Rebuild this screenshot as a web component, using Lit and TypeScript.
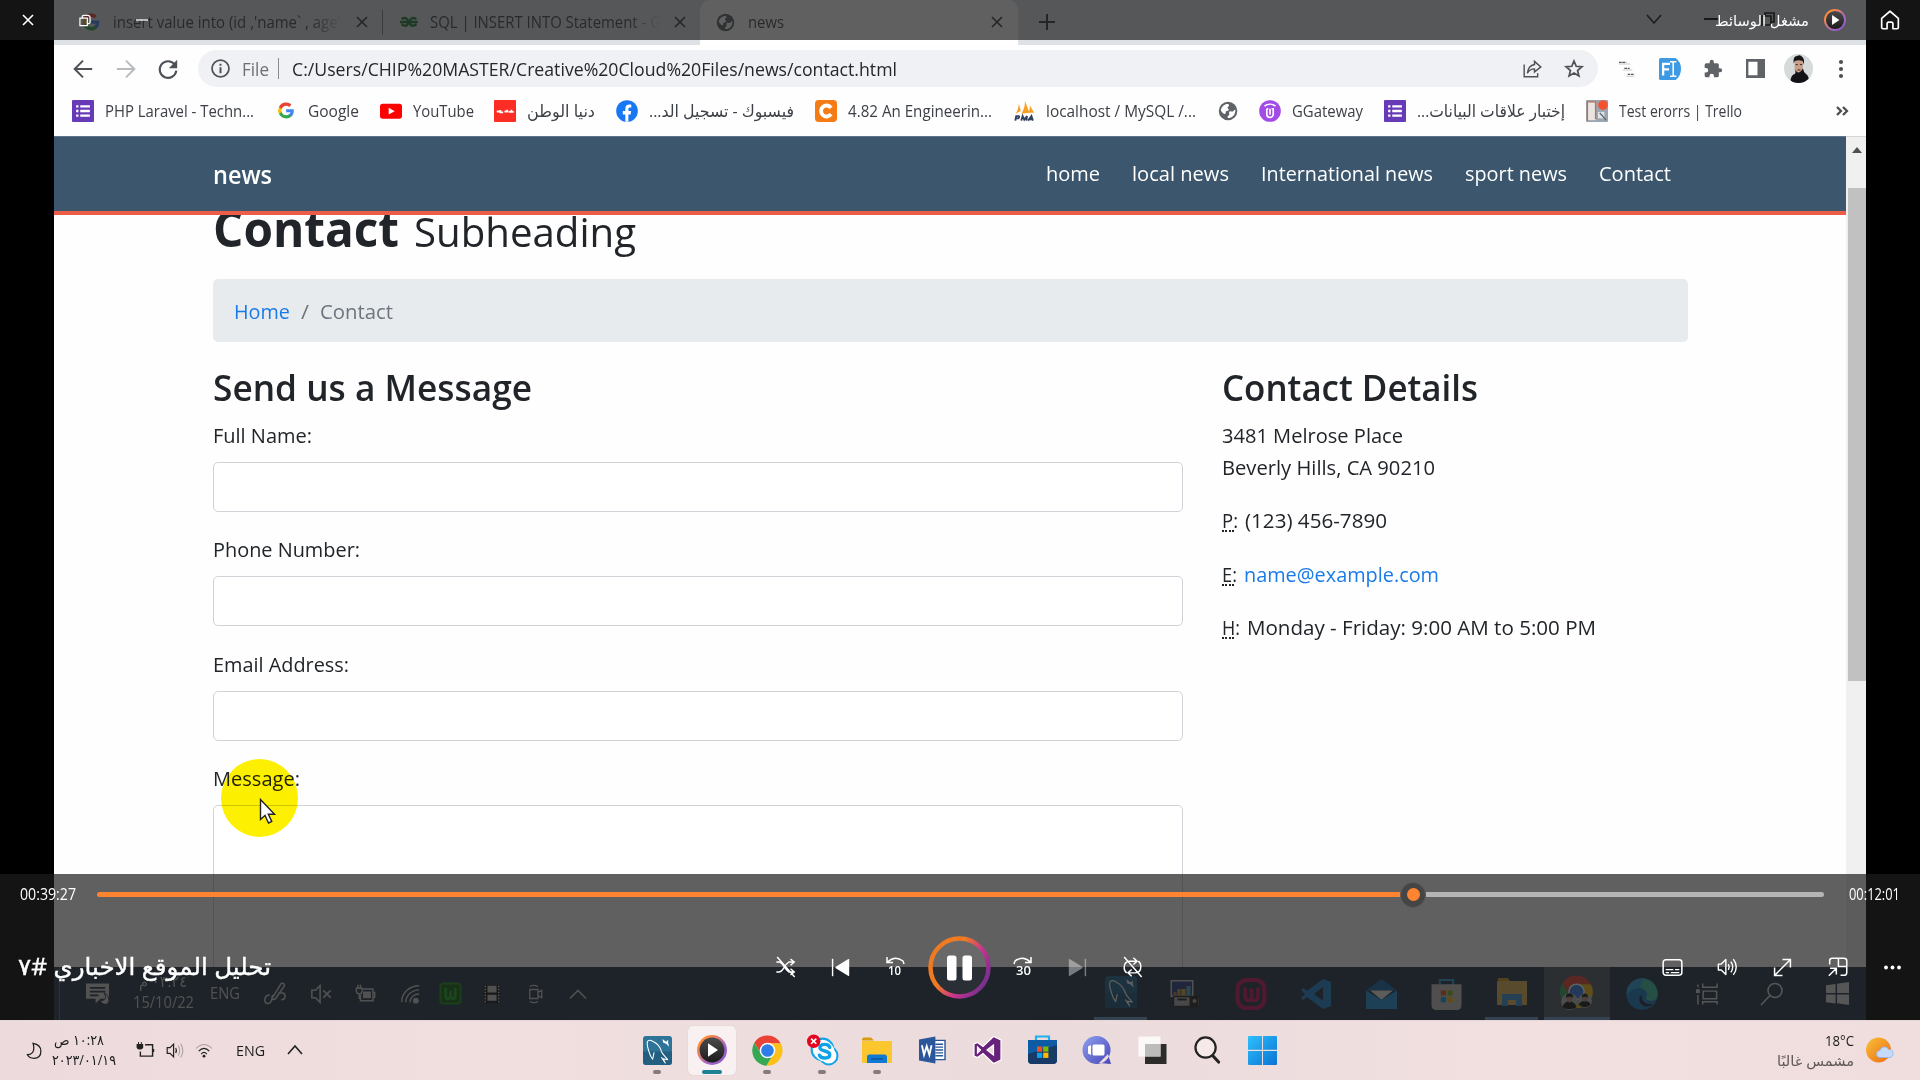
import { LitElement, html, css, svg, TemplateResult } from 'lit';
import { customElement, property } from 'lit/decorators.js';

/** Text squeezed or stretched horizontally to an exact width. */
@customElement('fit-text')
class FitText extends LitElement {
  @property({ type: Number }) w = 0;
  @property() flow = 'ltr';
  static styles = css`
    :host { display: inline-block; white-space: pre; direction: ltr; flex: none; text-align: left; }
    span { display: inline-block; transform-origin: 0 50%; }
  `;
  render() {
    return html`<span dir=${this.flow}><slot></slot></span>`;
  }
  updated() {
    const s = this.renderRoot.querySelector('span') as HTMLElement;
    s.style.transform = 'none';
    const n = s.getBoundingClientRect().width;
    this.style.width = this.w + 'px';
    if (n) s.style.transform = `scaleX(${this.w / n})`;
  }
}

const t = (text: string, w: number, flow = 'ltr') => html`<fit-text .w=${w} .flow=${flow}>${text}</fit-text>`;
const box = (w: number, h: number, body: TemplateResult | TemplateResult[], vb = '0 0 24 24') =>
  html`<svg width=${w} height=${h} viewBox=${vb} fill="none">${body}</svg>`;

const G = svg`<path fill="#4285f4" d="M23 12.3c0-.8-.1-1.500-.2-2.200H12.200v4.300h6.100c-.3 1.400-1.100 2.600-2.300 3.400v2.800h3.700c2.100-2 3.300-4.900 3.300-8.300z"/><path fill="#34a853" d="M12.200 23.200c3.100 0 5.600-1 7.500-2.700L16 17.700c-1 .7-2.300 1.100-3.800 1.100-2.900 0-5.400-2-6.300-4.700H2.100V17c1.900 3.700 5.700 6.200 10.100 6.200z"/><path fill="#fbbc05" d="M5.900 14.100c-.5-1.400-.5-2.900 0-4.300V6.900H2.100a11.200 11.200 0 0 0 0 10.100z"/><path fill="#ea4335" d="M12.200 5.200c1.700 0 3.100.6 4.300 1.700l3.200-3.200A11 11 0 0 0 2.100 6.900l3.800 2.900c.9-2.700 3.400-4.600 6.300-4.600z"/>`;
const GLOBE = svg`<circle cx="12" cy="12" r="11" fill="#5f6368"/><path fill="#fff" d="M3.500 11.500c.3-3.500 2.800-6.600 6.500-7.700 1.800-.4 3 .2 3.200 1.200.2 1.300-1.700 1.500-1.900 2.900-.1 1.300 1.900 1.400 1.600 2.900-.3 1.400-2.300.8-3.300 1.600-.9.8.2 2.100-.9 2.900-1.200.8-3.200-.6-5.200-3.800zM20.700 10.500c.3 4.700-2.300 8.700-6.700 9.700-1.500.3-2.700-.2-2.600-1.400.1-1.400 1.800-1.300 2.100-2.800.2-1.200-.8-2 .1-3.100 1.300-1.400 2.800.2 4.200-.4 1.200-.5 1.200-2.500 2.900-2z"/>`;
const FORMS = svg`<path fill="#673ab7" d="M1 0h22a1 1 0 0 1 1 1v22a1 1 0 0 1-1 1H1a1 1 0 0 1-1-1V1a1 1 0 0 1 1-1z"/><path stroke="#fff" stroke-width="2.600" d="M9 7h10.500M9 12h10.500M9 17h10.500M4.500 7h2.500M4.500 12h2.500M4.500 17h2.500"/>`;
const CHROME = svg`<path fill="#ea4335" d="M1.800 6A11.800 11.800 0 0 1 22.300 6.600H12a5.500 5.500 0 0 0-5 7.700z"/><path fill="#34a853" d="M1.800 6a11.800 11.800 0 0 0 9.400 17.800L16.700 14.800 12 12 7.300 15z"/><path fill="#fbc116" d="M22.300 6.600A11.800 11.800 0 0 1 11.200 23.800L16.700 14.800A5.500 5.500 0 0 0 12 6.600z"/><circle cx="12" cy="12" r="6" fill="#fff"/><circle cx="12" cy="12" r="4.900" fill="#2f7de9"/>`;
const DOLPHIN = (a: string, b: string) => svg`<rect width="30" height="30" rx="3" fill="${a}"/><path fill="${b}" opacity=".5" d="M0 16h30v11a3 3 0 0 1-3 3H3a3 3 0 0 1-3-3z"/><path stroke="#fff" stroke-width="1.100" fill="none" stroke-linejoin="round" d="M8 21C6 16 3.500 10 4.500 6 5.500 3.500 8.500 4 11 6c4 2 7 6 8 10 1.500 3.500 4 5 6.500 8.500l-4.500-1 2 4.500-4-6M8 21l2 3 1.500-7"/><path fill="#fff" d="m20 3 4 3 2-2 0 3 1 4-3-3-3-1z"/>`;
const FOLDER = (low: string) => svg`<path fill="#d89b0b" d="M0 3.500A2 2 0 0 1 2 1.500h7l3 3H0z"/><path fill="#fcc72e" d="M0 5h30v21a1 1 0 0 1-1 1H1a1 1 0 0 1-1-1z"/><path fill="${low}" d="M5 27v-6a2.500 2.500 0 0 1 2.500-2.500h15A2.500 2.500 0 0 1 25 21v6z"/><path stroke="#0a4f96" stroke-width="1.300" d="M9 23h12"/>`;

const dots4 = (x: number, y: number, s: number, g: number) => svg`<path fill="#f25022" d="M${x} ${y}h${s}v${s}h-${s}z"/><path fill="#7fba00" d="M${x + s + g} ${y}h${s}v${s}h-${s}z"/><path fill="#00a4ef" d="M${x} ${y + s + g}h${s}v${s}h-${s}z"/><path fill="#ffb900" d="M${x + s + g} ${y + s + g}h${s}v${s}h-${s}z"/>`;

const bookmarks: [TemplateResult, string, number, string?][] = [
  [box(22, 22, FORMS), 'PHP Laravel - Techn...', 149],
  [box(22, 17, G), 'Google', 51],
  [box(22, 22, svg`<rect y="4" width="24" height="16.500" rx="3" fill="#f00"/><path fill="#fff" d="m9.500 8.500 6.500 3.700-6.500 3.700z"/>`), 'YouTube', 61],
  [box(22, 22, svg`<rect width="24" height="24" rx="1" fill="#fb2d25"/><path stroke="#fff" stroke-width="2" d="M3 12.500h3M7 11v2.500h3M11.500 12.500h3v-2M16 13h2M19 10.500v2.500h2.500"/>`), 'دنيا الوطن', 68, 'rtl'],
  [box(22, 22, svg`<circle cx="12" cy="12" r="11.800" fill="#1877f2"/><path fill="#fff" d="M10.200 23.700v-8H7.400V12h2.800V9.500c0-3 1.700-4.500 4.300-4.500 1.200 0 2.200.2 2.200.2v2.900h-1.400c-1.400 0-1.800.9-1.800 1.700V12h3l-.5 3.700h-2.500v8z"/>`), 'فيسبوك - تسجيل الد...', 145, 'rtl'],
  [box(22, 22, svg`<rect width="24" height="24" rx="4" fill="#f57c14"/><path stroke="#fff" stroke-width="4.200" d="M17.500 8.500A6 6 0 1 0 17.500 15.500"/>`), '4.82 An Engineerin...', 144],
  [box(22, 22, svg`<path fill="#f7a024" d="M3 15C5 11 6 8 6.500 4l2 8zM9 15C12 10 13 7 13 1l5 13zM17 14c1-3 1.500-5 1.500-8l4.500 8z"/><path stroke="#33415f" stroke-width="2" d="M2.500 22.500 3.500 17.500h2.700q1.300 1.200-.5 2.600H3M9 22.500l1.500-5 1.800 4 3-4-.8 5M16.500 22.500l3.600-5 1.600 5M18 21h3.500"/>`), 'localhost / MySQL /...', 150],
  [box(22, 22, svg`<g transform="translate(1 1) scale(.92)">${GLOBE}</g>`), '', 0],
  [box(22, 22, svg`<circle cx="12" cy="12" r="11.800" fill="#a24be6"/><path stroke="#fff" stroke-width="1.800" d="M6 6.500c3.500-2.500 8.500-2.500 12 0M8.500 9.500v6a3.500 3.500 0 0 0 7 0v-6h-1.800M12 9.500v6.500M8.500 9.500h1.700"/>`), 'GGateway', 71],
  [box(22, 22, FORMS), 'إختبار علاقات البيانات...', 148, 'rtl'],
  [box(22, 22, svg`<rect width="24" height="24" rx="1" fill="#9aa6b0"/><path fill="#e8e4df" d="M2 2h9v20H2z"/><path stroke="#b3705e" stroke-width="1.500" d="M1.500 23V2h9v19"/><path fill="#dfe3e6" d="M13 13h7v7h-7z"/><path stroke="#59636c" stroke-width="1.500" d="m15 14 7 8"/><circle cx="18.500" cy="5.500" r="5.300" fill="#f45331"/>`), 'Test erorrs | Trello', 123],
];

const PLAY = svg`<defs><linearGradient id="pl" x1="0" y1="0" x2="1" y2="1"><stop offset=".2" stop-color="#ff8b3d"/><stop offset=".65" stop-color="#a566c8"/><stop offset="1" stop-color="#7f55c0"/></linearGradient><linearGradient id="pd" x1="0" y1="0" x2="0" y2="1"><stop stop-color="#4a4a4a"/><stop offset="1" stop-color="#1c1c1c"/></linearGradient></defs><circle cx="15" cy="15" r="15" fill="url(#pl)"/><circle cx="15" cy="15" r="12.400" fill="url(#pd)"/><path fill="#fff" d="M11 8.300 21 15l-10 6.700z"/>`;

const innerApps = [
  box(32, 32, DOLPHIN('#1d6590', '#0e4460'), '0 0 30 30'),
  box(31, 28, svg`<path fill="#ccc" d="M0 0h23v17H0z"/><path fill="#29428a" d="M1.500 1.500h20v14h-20z"/><path fill="#c07a48" d="M3 12h3v4H3z"/><path fill="#b8a040" d="M7 9h3v7H7z"/><path fill="#d8b030" d="M11 9h4v7h-4z"/><path fill="#58a8c0" d="M16 6h4v10h-4z"/><rect x="3" y="16.500" width="26" height="10" rx="1" fill="#b0b0b0" stroke="#222" stroke-width="1.300"/><path stroke="#222" stroke-width="2" d="M7 19.500h9"/><path fill="#222" d="M19 17h9v9h-9z"/><circle cx="24" cy="21" r="2" fill="#aaa"/>`, '0 0 30 28'),
  box(32, 32, svg`<rect x="2.500" y="2" width="25" height="26" rx="8" stroke="#c6125e" stroke-width="4"/><path stroke="#c6125e" stroke-width="3.500" d="M9.500 9v8q0 4 3 4t3-4V10M15.500 17q0 4 3 4t3-4V9"/>`, '0 0 30 30'),
  box(32, 32, svg`<path fill="#1e88d2" fill-rule="evenodd" d="M22 1 30 4v24l-8 3L6 19l-4 3-2-2 4-4-4-4 2-2 4 3zM22 9l-9 7 9 7z"/>`, '0 0 30 32'),
  box(33, 32, svg`<path fill="#1466ac" d="M0 12 15 1l15 11z"/><path fill="#f3f1ee" d="M4 12h22l-11 9z"/><path fill="#2195dd" d="M0 12l15 9 15-9v18H0z"/>`, '0 0 30 31'),
  box(31, 32, svg`<path stroke="#2a9fd0" stroke-width="2" d="M8 6V2h13v5"/><path fill="#c8c7c4" d="M0 6h29v21a4 4 0 0 1-4 4H4a4 4 0 0 1-4-4z"/>${dots4(9, 12, 5, 1.5)}`, '0 0 29 31'),
  box(30, 28, svg`<path fill="#cf9524" d="M1 0h10l2 3H1z"/><path fill="#e3b756" d="M0 3h30v24H0z"/><path fill="#3b8fd8" d="M5 28V16h20v12h-6v-6h-8v6z"/>`, '0 0 30 28'),
  box(35, 35, svg`${CHROME}<circle cx="7" cy="19" r="6" fill="#b9bec0"/><path fill="#171513" d="M2 23q1-4 5-4t5 4q-5 3-10 0zM4.500 14.500q2.500-3 5 0v2h-5z"/><path fill="#b78f7c" d="M5 15.500h4v2.500l-2 2-2-2z"/><circle cx="18" cy="18.500" r="5" fill="#b9bec0"/><path fill="#171513" d="M13.500 21.500q1-3 4.500-3t4 3q-4 3-8.500 0zM16 14.500q2-2.500 4 0v2h-4z"/><path fill="#b78f7c" d="M16.500 15.500h3v2l-1.500 2-1.500-2z"/>`, '0 0 24 25'),
  box(32, 32, svg`<circle cx="12" cy="12" r="11.800" fill="#1679c4"/><path fill="#3cc6a0" d="M1 8A11.800 11.800 0 0 1 23.800 12c0 4-3.200 5.500-6 5-2.500-.5-3.300-1.700-2.500-3C17 11 14 7.500 9.500 7.500 6 7.500 3 9 1 12z"/><path fill="#2b9fd9" d="M1 8A11.800 11.800 0 0 1 15 .6c-4 1-3 6-5.500 6.900C6 7.500 3 9 .3 12z"/><path fill="#1b2430" d="M12 13c-1 4 2 7.500 8.500 6.500-4 4-11 1-10.500-4 .1-1.300.8-2.300 2-2.500z"/>`),
  box(23, 24, svg`<path stroke="#ddd" stroke-width="1.500" d="M2 2v3M2 13v10M7 1v4h15V1M7.500 9h14v8h-14zM7 23v-3h15v3"/><path fill="#ddd" d="M0 7h4v4H0z"/>`),
  box(24, 24, svg`<circle cx="15" cy="8.500" r="7" stroke="#ddd" stroke-width="1.600"/><path stroke="#ddd" stroke-width="1.600" d="M10 13.500 1 23"/>`),
  box(23, 23, svg`<path fill="#ddd" d="M0 3.500 10 2v9.500H0zM11.500 1.800 24 0v11.500H11.500zM0 13h10v9.500L0 21zM11.500 13H24v11l-12.500-1.800z"/>`),
];

const innerTray: [number, TemplateResult][] = [
  [63, box(23, 24, svg`<path fill="#d0d0d0" d="M0 1h24v16h-9l-5 5v-5H0z"/><path stroke="#213546" stroke-width="1.800" d="M4 5.500h16M4 9.500h16M4 13.500h9"/><path fill="#d0d0d0" stroke="#213546" d="M19 11c3 5 1 8-4 8 1 4 8 6 9 0 0-4-2-7-5-8z"/>`)],
  [68, html`<div class="clock2"><span>${t('٠٣:٢٤ م', 48, 'rtl')}</span><span>${t('15/10/22', 61)}</span></div>`],
  [56, html`<span class="eng2">${t('ENG', 30)}</span>`],
  [45, box(23, 24, svg`<path stroke="#ccc" stroke-width="1.600" d="M6 13c-6 0-7 9-2 9s3-6 6-8l8-13c3-1 4 2 3 3L12 17l-4 1 1-5M15 11q7-1 7 3t-4 4"/>`)],
  [46, box(22, 22, svg`<path stroke="#ccc" stroke-width="1.700" d="M2 8h4l5-5v18l-5-5H2zM14.500 8l8 8M22.500 8l-8 8"/>`)],
  [43, box(23, 20, svg`<path stroke="#ccc" stroke-width="1.700" d="M9 6h12v14H6v-7M21 10h2v6h-2M1 5h7v4q-1 3-3.500 3T1 9zM3 1v4M6 1v4M4.500 12v6"/><path fill="#ccc" d="M9 9h9.500v8H9z"/>`)],
  [45, box(20, 22, svg`<path stroke="#ccc" stroke-width="1.700" d="M2 22C2 11 11 2 23 2M7 22C7 14 14 7 23 7M12 22c0-6 5-10 11-10"/><circle cx="19" cy="20" r="3.500" fill="#ccc"/>`)],
  [37, box(23, 23, svg`<rect x="1.500" y="1.500" width="21" height="21" rx="3" fill="#105a10" stroke="#159015" stroke-width="2"/><path stroke="#18a818" stroke-width="3" d="M7 6v10q2 3 5 0V9M12 16q3 3 5 0V6"/>`)],
  [46, box(18, 22, svg`<path fill="#111" d="M1 0h22v24H1z"/><path fill="#ccc" d="M6 1h12v9H6zM6 13h12v8H6z"/><path stroke="#ccc" stroke-width="2" stroke-dasharray="2 2" d="M3 1v22M21 1v22"/>`)],
  [40, box(18, 24, svg`<path stroke="#ccc" stroke-width="1.800" d="M5 6h11v12H5zM16 10l5-3v10l-5-3M5 2q5.500-3 11 0M5 22q5.500 3 11 0"/>`)],
  [46, box(18, 12, svg`<path stroke="#ccc" stroke-width="1.700" d="m1 11 9-9 9 9"/>`, '0 0 20 12')],
];

const taskIcons: [TemplateResult, string][] = [
  [box(29, 29, DOLPHIN('#2e7398', '#164b68'), '0 0 30 30'), 'dot'],
  [box(30, 30, PLAY, '0 0 30 30'), 'active'],
  [box(31, 31, CHROME), 'dot'],
  [box(31, 31, svg`<circle cx="15" cy="14" r="10.500" fill="#fff" stroke="#12a5e8" stroke-width="2"/><circle cx="21" cy="20" r="8.500" fill="#fff" stroke="#12a5e8" stroke-width="2"/><circle cx="17" cy="16" r="9.500" fill="#fff"/><path stroke="#0fa2e6" stroke-width="3.300" stroke-linecap="round" d="M22 12c-1-4-10-4-9.500.5.500 4 9.500 2 9.500 6.500 0 4-8.500 4.500-10 .5"/><circle cx="6.500" cy="6" r="6.500" fill="#e4061f"/><path stroke="#fff" stroke-width="1.600" d="m4 3.500 5 5M9 3.500l-5 5"/>`, '0 0 30 30'), 'dot'],
  [box(30, 28, FOLDER('#1279d3'), '0 0 30 28'), 'dot'],
  [box(27, 28, svg`<path fill="#fff" stroke="#2b579a" stroke-width="1.500" d="M12 4h15v20H12z"/><path stroke="#2b579a" stroke-width="1.500" d="M17 8h8M17 11h8M17 14h8M17 17h8M17 20h8"/><path fill="#2b579a" d="M0 3 17 0v28L0 25z"/><path stroke="#fff" stroke-width="1.900" d="m3 9 2.200 10L8 10l2.800 9L13 9"/>`, '0 0 28 28'), ''],
  [box(29, 30, svg`<path fill="#68217a" fill-rule="evenodd" stroke="#fff" stroke-width="1.200" d="M20.500 1 28 4.500v20L20.500 28 10 18l-5.500 4L1 20.500v-12L4.500 7l5.500 4zM20.500 9.500 14 14.500l6.500 5zM4.500 11.500v6l3-3z"/>`, '0 0 29 29'), ''],
  [box(29, 30, svg`<path stroke="#1fb0f0" stroke-width="2.200" d="M8 7V1.500h13V7"/><path fill="#0e5ba5" d="M0 5h29v20a4 4 0 0 1-4 4H4a4 4 0 0 1-4-4z"/><path fill="#173b66" d="M0 19 29 10v15a4 4 0 0 1-4 4H4a4 4 0 0 1-4-4z"/>${dots4(9, 11.500, 5.2, 1)}`, '0 0 29 30'), ''],
  [box(29, 29, svg`<defs><linearGradient id="ct" x1="0" y1="0" x2="1" y2="1"><stop stop-color="#8ea0f0"/><stop offset="1" stop-color="#4746b8"/></linearGradient></defs><path fill="url(#ct)" d="M14 0a14 14 0 1 1-1 28 14 14 0 0 1 1-28zM16 27l12 1-3-10z"/><rect x="9.500" y="8.500" width="12" height="11" rx="1.500" fill="#fff"/><path fill="#fff" d="M5 10.500 8 9v10l-3-1.500z"/>`, '0 0 29 29'), ''],
  [box(29, 29, svg`<path fill="#2c2c2b" d="M7 8h21.500v20H7z"/><path fill="#fff" d="M.5.500h22v20H.5z" opacity=".8"/><path fill="#bdbcba" d="M7 8h15.500v12.500H7z"/>`, '0 0 29 29'), ''],
  [box(27, 28, svg`<circle cx="12" cy="11.500" r="10.500" fill="#f5e9ea" stroke="#232323" stroke-width="2.300"/><path stroke="#232323" stroke-width="3.200" stroke-linecap="round" d="m19.500 20 6 6.500"/>`, '0 0 28 28'), ''],
  [box(29, 29, svg`<defs><linearGradient id="wn" x1="0" y1="0" x2="1" y2="1"><stop stop-color="#2fc0fb"/><stop offset="1" stop-color="#0873d4"/></linearGradient></defs><path fill="url(#wn)" d="M1 0h13v13.800H0V1a1 1 0 0 1 1-1zM15 0h13a1 1 0 0 1 1 1v12.800H15zM0 15h14v14H1a1 1 0 0 1-1-1zM15 15h14v13a1 1 0 0 1-1 1H15z"/>`, '0 0 29 29'), ''],
];

@customElement('app-root')
class AppRoot extends LitElement {
  static styles = css`
    :host { display: block; width: 1920px; height: 1080px; overflow: hidden; position: relative; background: #000; font-family: 'Open Sans', 'DejaVu Sans', sans-serif; color: #212529; }
    * { box-sizing: border-box; }
    svg { display: block; flex: none; overflow: visible; }
    .row { display: flex; align-items: center; }
    .desk { display: grid; grid-template-rows: 1020px 60px; height: 1080px; }
    .stage { position: relative; padding: 0 54px; }
    .video { width: 1812px; height: 1020px; background: #fefefe; display: grid; grid-template-rows: 45px 48px 43px 831px 53px; overflow: hidden; }

    .tabs { background: #dee1e6; height: 45px; color: #45484c; font-size: 16px; align-items: flex-start; }
    .tab { display: flex; align-items: center; height: 45px; padding-bottom: 1px; }
    .t1 { width: 330px; padding-left: 27px; }
    .t2 { width: 316px; padding-left: 16px; }
    .t3 { width: 318px; padding-left: 16px; background: #fff; border-radius: 10px 10px 0 0; }
    .sep { width: 1px; height: 25px; background: #85888c; margin-left: 14px; }
    .fade { -webkit-mask-image: linear-gradient(90deg, #000 86%, transparent); mask-image: linear-gradient(90deg, #000 86%, transparent); margin-left: 12px; }
    .x { margin-left: 14px; }
    .t2 .fade { margin-left: 12px; }
    .t2 .x { margin-left: 13px; }
    .t3 .name { margin: 0 207px 0 13px; }
    .plus { margin: 14px 0 0 21px; }
    .win { margin: 12px 0 0 592px; display: flex; align-items: center; gap: 43px; height: 14px; }

    .bar { height: 48px; padding: 5px 0 6px 19px; }
    .nav-ic { width: 42.500px; }
    .pill { width: 1400px; height: 37px; border-radius: 19px; background: #f0f1f4; margin-left: -2.500px; padding-left: 13px; font-size: 18px; color: #24272b; }
    .pill .f { color: #6b6f74; margin-left: 12px; }
    .pill i { width: 1px; height: 21px; background: #888c91; margin: 0 13px 0 9px; }
    .pill .end { margin-left: auto; display: flex; gap: 21px; padding-right: 14px; }
    .exts { display: flex; align-items: center; margin-left: 8px; }
    .ext { width: 42.700px; display: flex; justify-content: center; }
    .bm { padding: 0 0 8px 18px; gap: 20.800px; font-size: 16.500px; color: #3d4147; }
    .bm .b { display: flex; align-items: center; gap: 11px; height: 24px; }
    .more { margin-left: auto; margin-right: 22px; }

    .page { position: relative; display: grid; grid-template-columns: 1792px 20px; overflow: hidden; height: 831px; font-size: 20.400px; }
    .topnav { position: absolute; left: 0; top: 0; width: 1792px; height: 79px; background: #3b566d; border-bottom: 4px solid #ec5d47; padding: 0 175px 2px 159px; display: flex; align-items: center; color: #fff; border-top: 1px solid #5f7488; }
    .brand { font-size: 24.500px; font-weight: 600; margin-top: 4px; line-height: 30px; }
    .links { margin-left: auto; display: flex; gap: 32px; line-height: 30px; font-weight: 500; }
    .content { padding: 62px 158px 0 159px; }
    .h1 { display: flex; align-items: baseline; height: 60px; line-height: 60px; font-size: 51px; font-weight: 700; gap: 15px; margin-top: -1px; }
    .h1 small { font-size: 41px; font-weight: 400; }
    .crumb { margin-top: 22px; height: 63px; border-radius: 5px; background: #e8ebee; padding: 0 21px; gap: 11px; color: #6c757d; }
    .blue { color: #1a7be8; }
    .cols { display: grid; grid-template-columns: 970px 1fr; gap: 39px; padding-top: 25px; }
    .h2 { font-size: 35.500px; font-weight: 600; line-height: 40px; height: 40px; margin-bottom: 13px; display: flex; }
    .label { line-height: 31px; height: 31px; display: flex; }
    .in { height: 50px; border: 1.500px solid #cfd3d7; border-radius: 5px; margin: 11px 0 22.300px; background: #fff; }
    .area { height: 260px; }
    .details .h2 { margin-bottom: 12px; }
    .addr { display: flex; line-height: 32px; height: 32px; gap: 7px; }
    .gap { margin-top: 21.300px; }
    .abbr { position: relative; }
    .abbr::after { content: ''; position: absolute; left: 0; bottom: 4px; width: 12px; border-bottom: 2px dotted #212529; }
    .scroll { background: #f0f0f0; display: flex; flex-direction: column; align-items: center; padding: 10px 0 9px 2px; border-top: 1px solid #d5d5d5; }
    .thumb { width: 18px; height: 493px; background: #c1c1c1; margin: 35px 0 auto; }

    .vbar { background: #213546; display: flex; }
    .slot { display: flex; justify-content: center; align-items: center; height: 53px; flex: none; }
    .tray2 { display: flex; width: 1029px; border-left: 1px solid #5d6a75; margin-left: 5px; padding-left: 6px; color: #ccc; }
    .clock2 { display: flex; flex-direction: column; align-items: center; font-size: 16px; line-height: 21px; margin-top: -3px; }
    .eng2 { font-size: 17px; margin-top: -2px; }
    .app2 { width: 65.200px; height: 53px; display: flex; align-items: center; justify-content: center; flex: none; }
    .line { border-bottom: 3px solid #6a9fd0; margin: 0 6px; width: 53.200px; }
    .sel { background: #4f5c66; border-bottom: 3px solid #6a9fd0; }

    .halo { position: absolute; left: 221px; top: 759px; width: 77px; height: 78px; border-radius: 50%; background: #fdf000; mix-blend-mode: multiply; }
    .cursor { position: absolute; left: 259px; top: 798px; }

    .over { position: absolute; left: 0; width: 1920px; background: rgba(28, 28, 28, .7); color: #fff; }
    .otop { top: 0; height: 40px; }
    .obot { top: 874px; height: 146px; }
    .otop .l { display: flex; align-items: center; padding-left: 22px; gap: 45px; height: 38px; flex: 1; }
    .otop .t { font-size: 15px; margin-right: 15px; }
    .otop .home { margin: 0 20px 0 34px; }
    .seek { height: 41px; padding: 0 20px; font-size: 15.500px; }
    .seek fit-text { margin-top: -2px; }
    .track { display: flex; align-items: center; width: 1727px; margin: 0 25px 0 21px; height: 5px; }
    .done { height: 5px; width: 1305px; background: #ff8431; border-radius: 3px 0 0 3px; }
    .knob { width: 26px; height: 26px; border-radius: 50%; background: #454545; border: 1px solid #5a5a5a; display: grid; place-items: center; flex: none; margin-left: -2px; }
    .knob i { width: 13px; height: 13px; border-radius: 50%; background: #ff8431; }
    .rest { height: 5px; flex: 1; background: #b5b5b5; border-radius: 0 3px 3px 0; }
    .ctl { height: 64px; margin-top: 20px; display: grid; grid-template-columns: 758px 402px 1fr; align-items: center; }
    .ttl { font-size: 24px; font-weight: 500; padding: 0 0 3px 18px; -webkit-text-stroke: .4px #fff; }
    .mid { display: flex; align-items: center; }
    .c { width: 55px; display: flex; justify-content: center; align-items: center; }
    .cp { width: 74px; }
    .skip { display: flex; flex-direction: column; align-items: center; font-size: 12.500px; line-height: 12px; font-weight: 600; gap: 0; }
    .right { display: flex; justify-content: flex-end; }
    .dim { opacity: .4; }

    .task { background: linear-gradient(90deg, #ecdadd, #f1dfdf 25%, #ebdbdc 55%, #f2e0e0 80%, #efdedd); display: grid; grid-template-columns: 629.500px 660px 1fr; color: #1c1c1c; border-top: 1px solid #e6d6d6; }
    .tray { display: flex; align-items: center; padding: 0 0 1px 26px; font-size: 14px; }
    .clk { display: flex; flex-direction: column; line-height: 20px; margin: 0 18px 0 9px; width: 66px; }
    .clk span { display: flex; }
    .tm { margin-left: 2px; }
    .sp1 { width: 9px; }
    .sp2 { width: 22px; }
    .apps { display: flex; }
    .ti { width: 55px; height: 59px; display: flex; flex-direction: column; align-items: center; padding-top: 5px; }
    .ti > div { width: 48px; height: 49px; display: grid; place-items: center; flex: none; padding-bottom: 1px; }
    .ti.active > div { background: #f8f0f1; border-radius: 5px; box-shadow: 0 0 1px #cbb; }
    .ti b { display: block; width: 8px; height: 4px; border-radius: 2px; margin-top: -5px; }
    .ti.dot b { background: #857b7c; }
    .ti.active b { width: 20px; background: #1f8294; }
    .wx { display: flex; justify-content: flex-end; align-items: center; padding: 0 26px 0 0; gap: 12px; font-size: 14.500px; }
    .wx div { display: flex; flex-direction: column; align-items: flex-end; line-height: 20px; }
    .wx .s { color: #5f5657; font-size: 14px; }
  `;

  private cross(size = 12, c = '#36393c') {
    return html`<svg width=${size} height=${size} viewBox="0 0 12 12"><path d="M1 1l10 10M11 1L1 11" stroke=${c} stroke-width="1.600"/></svg>`;
  }

  private browser() {
    const d = '#4e5256';
    return html`
      <div class="tabs row">
        <div class="tab t1">${box(20, 18, G)}<span class="fade">${t("insert value into (id ,'name` , age)", 229)}</span><span class="x">${this.cross()}</span><span class="sep"></span></div>
        <div class="tab t2">${box(18, 14, svg`<path stroke="#1f7f3a" stroke-width="3.200" d="M2 4q8-4 9 4-1 8-9 3M0 8h24M22 4q-8-4-9 4 1 8 9 3"/>`, '0 0 24 16')}<span class="fade">${t('SQL | INSERT INTO Statement - G', 231)}</span><span class="x">${this.cross()}</span></div>
        <div class="tab t3">${box(19, 19, GLOBE)}<span class="name">${t('news', 36)}</span>${this.cross()}</div>
        <span class="plus">${box(16, 16, svg`<path stroke="#36393c" stroke-width="2" d="M8 0v16M0 8h16"/>`, '0 0 16 16')}</span>
        <span class="win">
          ${box(14, 9, svg`<path stroke="#222" stroke-width="1.700" d="m0 0 7 8 7-8"/>`, '0 0 14 9')}
          ${box(14, 2, svg`<path stroke="#111" stroke-width="2" d="M0 1h14"/>`, '0 0 14 2')}
          ${box(14, 14, svg`<path stroke="#111" stroke-width="1.700" d="M1 4h9v9H1zM4 4V1h9v9h-3"/>`, '0 0 14 14')}
        </span>
      </div>
      <div class="bar row">
        <span class="nav-ic">${box(20, 20, svg`<path stroke="${d}" stroke-width="2.400" d="M23 12H2M12 2 2 12l10 10"/>`)}</span>
        <span class="nav-ic">${box(20, 20, svg`<path stroke="#b9bcbf" stroke-width="2.400" d="M1 12h21M12 2l10 10-10 10"/>`)}</span>
        <span class="nav-ic">${box(20, 20, svg`<path stroke="${d}" stroke-width="2.500" d="M20 6.500A10 10 0 1 0 22 14"/><path fill="${d}" d="M23 1v10H13z"/>`)}</span>
        <div class="pill row">
          ${box(19, 19, svg`<circle cx="12" cy="12" r="10.700" stroke="${d}" stroke-width="2.200"/><path stroke="${d}" stroke-width="2.500" d="M12 10.500V18M12 6v2.600"/>`)}
          <span class="f">${t('File', 27)}</span><i></i>
          ${t('C:/Users/CHIP%20MASTER/Creative%20Cloud%20Files/news/contact.html', 605)}
          <span class="end">
            ${box(21, 19, svg`<path stroke="${d}" stroke-width="1.800" d="M1.500 7v15.500h17V18M14.500 3l8 7-8 6.500V12.500q-6 0-9 5.500 1-9.500 9-11z"/>`)}
            ${box(20, 19, svg`<path stroke="${d}" stroke-width="2.200" d="m12 2.500 2.800 6.700 7.200.6-5.500 4.700 1.700 7-6.200-3.800-6.200 3.800 1.700-7L2 9.800l7.200-.6z"/>`)}
          </span>
        </div>
        <div class="exts">
        <span class="ext">${box(16, 16, svg`<path stroke="#555" stroke-width="2" stroke-dasharray="4 1" d="M0 2h11M8 11h8M13 20h9"/><path stroke="#bbb" stroke-width="1.200" d="M0 4.500h17M6 13.500h14M11 23h12"/>`)}</span>
        <span class="ext">${box(22, 22, svg`<path fill="#3d9be5" d="M2 0h16q6 4 6 12t-6 12H2a2 2 0 0 1-2-2V2a2 2 0 0 1 2-2z"/><path stroke="#fff" stroke-width="2.500" d="M4.500 19V6.500H12M4.500 12.500H11"/><path stroke="#fff" stroke-width="1.700" d="M12 4h2.500l1 1 1-1H19M15.500 5v14M12 20h2.500l1-1 1 1H19"/>`)}</span>
        <span class="ext">${box(20, 20, svg`<path fill="#5f6368" d="M20.500 11H19V7a2 2 0 0 0-2-2h-4V3.500a2.500 2.500 0 0 0-5 0V5H4a2 2 0 0 0-2 2v3.800h1.500a2.700 2.700 0 0 1 0 5.400H2V20a2 2 0 0 0 2 2h3.800v-1.500a2.700 2.700 0 0 1 5.400 0V22H17a2 2 0 0 0 2-2v-4h1.500a2.500 2.500 0 0 0 0-5z"/>`)}</span>
        <span class="ext">${box(19, 19, svg`<path fill="#5f6368" d="M0 0h24v24H0z"/><path fill="#fff" d="M3 3.500h11.500v17H3z"/>`)}</span>
        <span class="ext">${box(29, 29, svg`<defs><clipPath id="av"><circle cx="15" cy="15" r="15"/></clipPath></defs><g clip-path="url(#av)"><path fill="#d5dadb" d="M0 0h30v30H0z"/><path fill="#c99f8a" d="M11 6h8.500v10q-1 5-4.300 5T11 16z"/><path fill="#17171a" d="M10 10Q9 2 13.500 2q3-2 5.500 1 2.500 2 1.500 8l-1-3.500q-4.500-2-8.500 0z"/><path fill="#111316" d="M6.500 30q0-8 5-9.500 1-1.500 0-4.500 3.500 7 8-1 1 4 3 5.500 3.500 2 3.500 9.500z"/><path stroke="#332522" d="M12 11h2.300M16.500 11h2.300M14 16.500h3"/></g>`, '0 0 30 30')}</span>
        <span class="ext">${box(6, 20, svg`<circle cx="3" cy="3" r="2.100" fill="${d}"/><circle cx="3" cy="10" r="2.100" fill="${d}"/><circle cx="3" cy="17" r="2.100" fill="${d}"/>`, '0 0 6 20')}</span>
        </div>
      </div>
      <div class="bm row">
        ${bookmarks.map(([i, s, w, f]) => html`<span class="b">${i}${s ? t(s, w, f) : ''}</span>`)}
        <span class="more">${box(12, 10, svg`<path stroke="#4b4f54" stroke-width="2.300" d="m1 1 4 4-4 4M7 1l4 4-4 4"/>`, '0 0 12 10')}</span>
      </div>`;
  }

  private page() {
    const field = (l: string, w: number, c = '') => html`<div class="label">${t(l, w)}</div><div class="in ${c}"></div>`;
    return html`
      <div class="page">
        <div class="content">
          <div class="h1">${t('Contact', 186)}<small>${t('Subheading', 222)}</small></div>
          <div class="crumb row"><span class="blue">${t('Home', 56)}</span>${t('/', 8)}${t('Contact', 73)}</div>
          <div class="cols">
            <div>
              <div class="h2">${t('Send us a Message', 319)}</div>
              ${field('Full Name:', 99)}${field('Phone Number:', 147)}${field('Email Address:', 136)}${field('Message:', 87, 'area')}
            </div>
            <div class="details">
              <div class="h2">${t('Contact Details', 256)}</div>
              <div class="addr">${t('3481 Melrose Place', 181)}</div>
              <div class="addr">${t('Beverly Hills, CA 90210', 213)}</div>
              <div class="addr gap"><span class="abbr">${t('P:', 16)}</span>${t('(123) 456-7890', 142)}</div>
              <div class="addr gap"><span class="abbr">${t('E:', 15)}</span><span class="blue">${t('name@example.com', 195)}</span></div>
              <div class="addr gap"><span class="abbr">${t('H:', 18)}</span>${t('Monday - Friday: 9:00 AM to 5:00 PM', 349)}</div>
            </div>
          </div>
        </div>
        <div class="scroll">
          ${box(10, 6, svg`<path fill="#505050" d="M0 6 5 0l5 6z"/>`, '0 0 10 6')}
          <div class="thumb"></div>
          ${box(10, 6, svg`<path fill="#505050" d="M0 0h10L5 6z"/>`, '0 0 10 6')}
        </div>
        <div class="topnav"><span class="brand">${t('news', 59)}</span>
          <span class="links">${t('home', 54)}${t('local news', 97)}${t('International news', 172)}${t('sport news', 102)}${t('Contact', 72)}</span>
        </div>
      </div>`;
  }

  private player() {
    const w = '#fff';
    return html`
      <div class="over otop row">
        <div class="l">${this.cross(12, w)}
          ${box(12, 13, svg`<path stroke="#fff" stroke-width="1.300" d="M1 4h8v8H1zM3.500 4V2.500q0-1.500 1.500-1.500h4.500Q12 1 12 3.500V8q0 1.500-1.500 1.800H9"/>`, '0 0 13 13')}
          ${box(12, 2, svg`<path stroke="#fff" stroke-width="1.300" d="M0 1h12"/>`, '0 0 12 2')}</div>
        <span class="t">${t('مشغل الوسائط', 94, 'rtl')}</span>
        ${box(22, 22, PLAY, '0 0 30 30')}
        <span class="home">${box(20, 20, svg`<path stroke="#fff" stroke-width="2" stroke-linejoin="round" d="M2 10 12 1.500 22 10v11q0 1.500-1.500 1.500H15.500v-6q0-2-2-2h-3q-2 0-2 2v6h-5Q2 22.500 2 21z"/>`)}</span>
      </div>
      <div class="over obot">
        <div class="seek row">${t('00:39:27', 56)}
          <div class="track"><span class="done"></span><span class="knob"><i></i></span><span class="rest"></span></div>
          ${t('00:12:01', 51)}</div>
        <div class="ctl">
          <div class="ttl">${t('تحليل الموقع الاخباري #٧', 253, 'rtl')}</div>
          <div class="mid">
            <span class="c">${box(21, 20, svg`<path stroke="#fff" stroke-width="1.700" d="M1 6h3q3 0 6 5t6 7h6M1 18h3q3 0 6-5t6-7h6M18 2.500 22.500 6 18 10M18 14l4.500 4-4.500 3.500M2 0l21 24"/>`)}</span>
            <span class="c">${box(19, 19, svg`<path stroke="#fff" stroke-width="1.800" d="M2 1v22"/><path fill="#fff" d="M23 2v20q0 1-1.500.500L6 13q-1-1 0-2L21.500 1.500Q23 1 23 2z"/>`)}</span>
            <span class="c skip">${box(18, 8, svg`<path stroke="#fff" stroke-width="1.500" d="M1 0v5.500h6M1.500 5Q9-2 17 4l1 3"/>`, '0 0 18 8')}${t('10', 13)}</span>
            <span class="c cp">${box(63, 63, svg`<defs><linearGradient id="rg" x1="0" y1=".2" x2="1" y2=".8"><stop offset=".35" stop-color="#f07a22"/><stop offset=".65" stop-color="#c83290"/><stop offset="1" stop-color="#6a2f8e"/></linearGradient></defs><circle cx="31.500" cy="31.500" r="29" fill="#fff" fill-opacity=".06" stroke="url(#rg)" stroke-width="4.500"/><rect x="19" y="19.500" width="9.500" height="25" rx="2.500" fill="#fff"/><rect x="34.500" y="19.500" width="9.500" height="25" rx="2.500" fill="#fff"/>`, '0 0 63 63')}</span>
            <span class="c skip">${box(18, 8, svg`<path stroke="#fff" stroke-width="1.500" d="M17 0v5.500h-6M16.500 5Q9-2 1 4L0 7"/>`, '0 0 18 8')}${t('30', 15)}</span>
            <span class="c dim">${box(19, 19, svg`<path stroke="#fff" stroke-width="1.800" d="M22 1v22"/><path fill="#fff" d="M1 2v20q0 1 1.500.500L18 13q1-1 0-2L2.500 1.500Q1 1 1 2z"/>`)}</span>
            <span class="c">${box(21, 20, svg`<path stroke="#fff" stroke-width="1.700" d="M5 19q-3-2-3-6.500Q2 5 9 5h8M13 1l4.500 4L13 9M19 5q3 2 3 6.500 0 7.500-7 7.500H7M11 15l-4.500 4 4.500 4M2 0l21 24"/>`)}</span>
          </div>
          <div class="right">
            <span class="c">${box(21, 17, svg`<rect x="1" y="1" width="22" height="18" rx="3" stroke="#fff" stroke-width="1.800"/><path stroke="#fff" stroke-width="1.600" d="M4 12.500h9M15 12.500h5M4 16h4M10 16h10"/>`, '0 0 24 20')}</span>
            <span class="c">${box(21, 20, svg`<path stroke="#fff" stroke-width="1.700" stroke-linejoin="round" d="M1 8.500h3.500L10 3v18l-5.500-5.500H1zM13 8.500q2 3.500 0 7M16 5.500q4.500 6.500 0 13M19 2.500q7 9.500 0 19"/>`)}</span>
            <span class="c">${box(19, 19, svg`<path stroke="#fff" stroke-width="1.900" d="M2 22 22 2M12 2h10v10M2 12v10h10"/>`)}</span>
            <span class="c">${box(20, 20, svg`<path stroke="#fff" stroke-width="1.800" d="M2 9V4.500Q2 1.500 5 1.500h14q3.500 0 3.500 3v14q0 3.500-3.500 3.500h-4M12.500 2v9.500h10M1 22.500l8.500-8.500M2.500 13.500H10V21"/>`)}</span>
            <span class="c">${box(17, 5, svg`<circle cx="2" cy="2.500" r="1.900" fill="#fff"/><circle cx="8.500" cy="2.500" r="1.900" fill="#fff"/><circle cx="15" cy="2.500" r="1.900" fill="#fff"/>`, '0 0 17 5')}</span>
          </div>
        </div>
      </div>`;
  }

  render() {
    return html`<div class="desk">
      <div class="stage">
        <div class="video">
          ${this.browser()}
          ${this.page()}
          <div class="vbar">
            <div class="tray2">${innerTray.map(([w, i]) => html`<span class="slot" style="width:${w}px">${i}</span>`)}</div>
            ${innerApps.map((i, k) => html`<span class="app2 ${k === 0 || k === 6 ? 'line' : k === 7 ? 'sel' : ''}">${i}</span>`)}
          </div>
        </div>
        <div class="halo"></div>
        <svg class="cursor" width="17" height="26" viewBox="0 0 17 26"><path fill="#fff" stroke="#222" stroke-width="1.400" d="M1.500 1.500v20l4.500-4 3.500 7.500 3.300-1.500-3.500-7.300H15.500z"/></svg>
        ${this.player()}
      </div>
      <div class="task">
        <div class="tray">
          ${box(17, 19, svg`<path stroke="#222" stroke-width="1.800" d="M10 2q11 2 11 11 0 10-10 10-6 0-9-5 9-1 9-9 0-4-1-7z"/>`)}
          <div class="clk"><span class="tm">${t('١٠:٢٨ ص', 50, 'rtl')}</span><span>${t('\u202d٢٠٢٣/٠١/١٩\u202c', 64)}</span></div>
          ${box(20, 16, svg`<path stroke="#222" stroke-width="1.500" d="M9 3h8v12H4v-5M18 7.500v3"/><path fill="#222" d="M0 2h7v4q-1 2-3.500 2T0 6zM1.500 0h1v2h-1zM4.500 0h1v2h-1z"/>`, '0 0 20 17')}
          <span class="sp1"></span>
          ${box(20, 17, svg`<path stroke="#222" stroke-width="1.700" d="M1 8h4l5-5v18l-5-5H1zM13 8.500q2 3.500 0 7"/><path stroke="#aaa0a2" stroke-width="1.500" d="M16.500 5q4.500 7 0 14M20 2q6 10 0 20"/>`)}
          <span class="sp1"></span>
          ${box(20, 17, svg`<path stroke="#aaa0a2" stroke-width="1.500" d="M1 9q11-11 22 0"/><path stroke="#222" stroke-width="1.700" d="M4.500 13q7.500-8 15 0M8 17q4-4.500 8 0"/><circle cx="12" cy="20" r="2" fill="#222"/>`)}
          <span class="sp2"></span>
          ${t('ENG', 29)}
          <span class="sp2"></span>
          ${box(16, 10, svg`<path stroke="#222" stroke-width="1.600" d="m1 9 7-8 7 8"/>`, '0 0 16 10')}
        </div>
        <div class="apps">${taskIcons.map(([i, c]) => html`<span class="ti ${c}"><div>${i}</div><b></b></span>`)}</div>
        <div class="wx">
          <div><span>${t('18°C', 29)}</span><span class="s">${t('مشمس غالبًا', 77, 'rtl')}</span></div>
          ${box(28, 27, svg`<defs><linearGradient id="sn" x1="0" y1="0" x2="1" y2="1"><stop stop-color="#f8c13a"/><stop offset="1" stop-color="#ee6a10"/></linearGradient></defs><circle cx="12.500" cy="13" r="12.500" fill="url(#sn)"/><path fill="#c6dbfb" stroke="#8fb2ef" stroke-width=".8" d="M14 20.500a3.500 3.500 0 0 1 0-7 4.500 4.500 0 0 1 8.500-1 4 4 0 1 1 1 8z"/>`, '0 0 28 27')}
        </div>
      </div>
    </div>`;
  }
}
